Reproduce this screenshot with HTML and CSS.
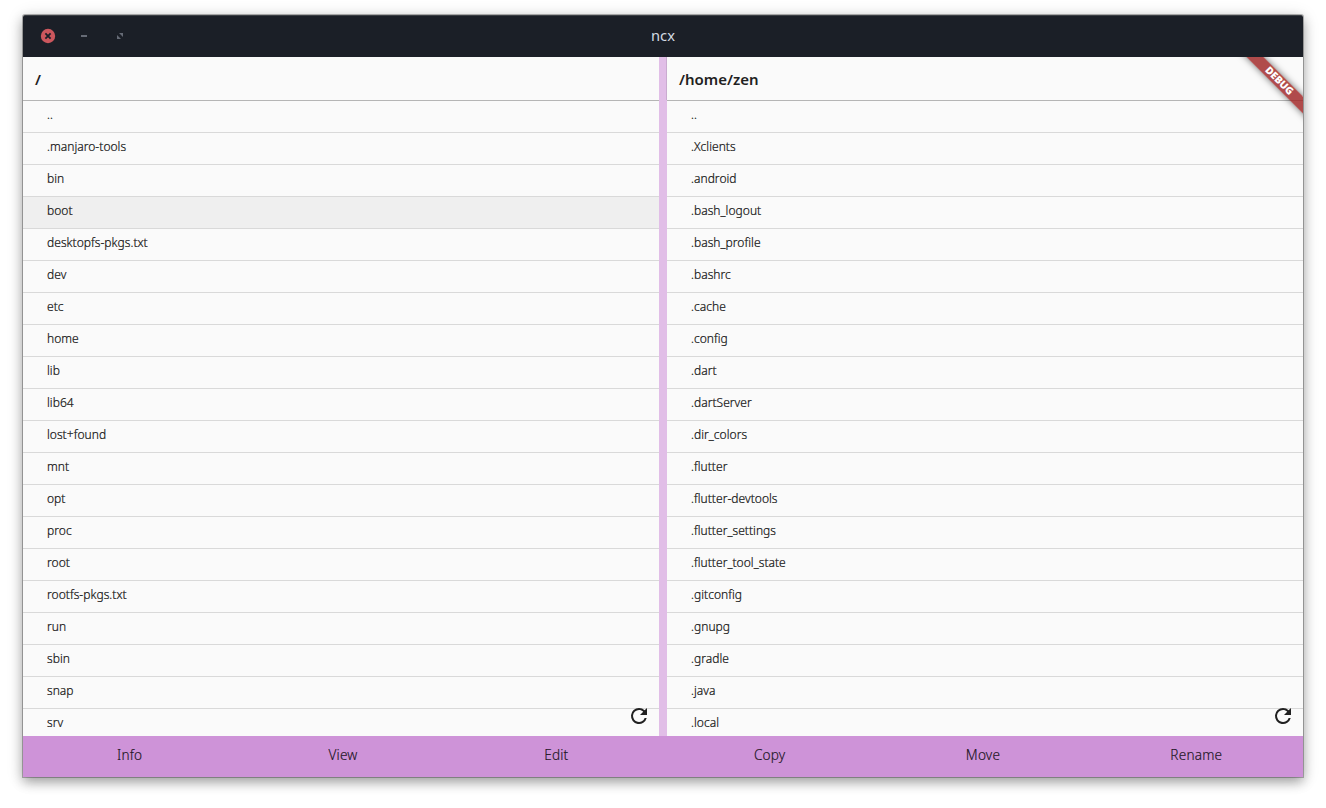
FILE: index.html
```html
<!DOCTYPE html>
<html lang="en">
<head>
<meta charset="utf-8">
<title>ncx</title>
<link rel="stylesheet" href="styles.css">
</head>
<body>
<div class="window">
  <header class="titlebar">
    <svg class="controls" width="110" height="42" viewBox="0 0 110 42">
      <circle cx="25" cy="21" r="7.2" fill="#cc575d"/>
      <path d="M22.4 18.4l5.2 5.2M27.6 18.4l-5.2 5.2" stroke="#1b1f27" stroke-width="1.8"/>
      <path d="M58 21h6" stroke="#666b76" stroke-width="2"/>
      <path d="M96 18h4v4zM94 20v4h4z" fill="#666b76"/>
    </svg>
    <span class="title">ncx</span>
  </header>
  <main class="panes">
    <section class="pane">
      <h1 class="path">/</h1>
      <ul class="files">
        <li>..</li><li>.manjaro-tools</li><li>bin</li><li class="selected">boot</li><li>desktopfs-pkgs.txt</li><li>dev</li><li>etc</li><li>home</li><li>lib</li><li>lib64</li><li>lost+found</li><li>mnt</li><li>opt</li><li>proc</li><li>root</li><li>rootfs-pkgs.txt</li><li>run</li><li>sbin</li><li>snap</li><li>srv</li>
      </ul>
      <svg class="refresh" viewBox="0 0 24 24"><path d="M17.65 6.35A7.96 7.96 0 0 0 12 4a8 8 0 1 0 7.73 10h-2.08A6 6 0 1 1 12 6c1.66 0 3.14.69 4.22 1.78L13 11h7V4z"/></svg>
    </section>
    <div class="divider"></div>
    <section class="pane">
      <h1 class="path">/home/zen</h1>
      <ul class="files">
        <li>..</li><li>.Xclients</li><li>.android</li><li>.bash_logout</li><li>.bash_profile</li><li>.bashrc</li><li>.cache</li><li>.config</li><li>.dart</li><li>.dartServer</li><li>.dir_colors</li><li>.flutter</li><li>.flutter-devtools</li><li>.flutter_settings</li><li>.flutter_tool_state</li><li>.gitconfig</li><li>.gnupg</li><li>.gradle</li><li>.java</li><li>.local</li>
      </ul>
      <svg class="refresh" viewBox="0 0 24 24"><path d="M17.65 6.35A7.96 7.96 0 0 0 12 4a8 8 0 1 0 7.73 10h-2.08A6 6 0 1 1 12 6c1.66 0 3.14.69 4.22 1.78L13 11h7V4z"/></svg>
    </section>
    <div class="debug"><span>DEBUG</span></div>
  </main>
  <footer class="actions">
    <span>Info</span><span>View</span><span>Edit</span><span>Copy</span><span>Move</span><span>Rename</span>
  </footer>
</div>
</body>
</html>
```
FILE: styles.css
```css
* { box-sizing: border-box; }
body {
  margin: 0;
  padding: 15px 23px 31px;
  height: 808px;
  overflow: hidden;
  background: #fff;
  font-family: "Noto Sans", sans-serif;
  color: #212121;
}
.window {
  display: flex;
  flex-direction: column;
  width: 1280px;
  height: 762px;
  border-radius: 2px 2px 0 0;
  box-shadow: 0 0 0 1px rgba(0, 0, 0, .27), 0 5px 12px rgba(0, 0, 0, .32), 0 2px 18px rgba(0, 0, 0, .14);
}
.titlebar {
  position: relative;
  flex: 0 0 42px;
  display: flex;
  align-items: center;
  justify-content: center;
  padding-bottom: 4px;
  border-top: 1px solid #3b3f44;
  border-radius: 2px 2px 0 0;
  background: #1b1f27;
  color: #d3dae3;
}
.controls { position: absolute; left: 0; top: -1px; }
.title { font-size: 14.7px; line-height: 20px; }
.panes {
  position: relative;
  flex: 1;
  min-height: 0;
  display: flex;
  overflow: hidden;
  background: #fafafa;
}
.pane {
  position: relative;
  flex: 1;
  min-width: 0;
  overflow: hidden;
}
.path {
  margin: 0;
  height: 44px;
  padding: 0 12px;
  border-bottom: 1px solid #b5b5b5;
  font-size: 15px;
  font-weight: 600;
  line-height: 45px;
}
.files { margin: 0; padding: 0; list-style: none; }
.files li {
  height: 32px;
  padding-left: 24px;
  border-bottom: 1px solid #d9d9d9;
  color: #111;
  -webkit-text-stroke: .2px #111;
  font-size: 12px;
  font-weight: 300;
  letter-spacing: .04px;
  line-height: 28px;
  white-space: nowrap;
}
.files .selected { background: #efefef; }
.divider { width: 8px; background: #e1bee7; }
.divider::before {
  content: "";
  display: block;
  height: 43px;
  border-right: 1px solid #caabd0;
}
.refresh {
  position: absolute;
  right: 8px;
  bottom: 8px;
  width: 24px;
  height: 24px;
  fill: #212121;
}
.debug {
  position: absolute;
  top: 0;
  right: 0;
  width: 80px;
  height: 80px;
  overflow: hidden;
}
.debug span {
  position: absolute;
  left: 4px;
  top: 18px;
  width: 104px;
  height: 12px;
  background: rgba(160, 36, 36, .82);
  box-shadow: 0 0 7px rgba(0, 0, 0, .55);
  color: #fff;
  font-size: 10.2px;
  font-weight: 900;
  line-height: 11px;
  text-align: center;
  transform: rotate(45deg);
}
.actions {
  flex: 0 0 41px;
  display: grid;
  grid-template-columns: repeat(6, 1fr);
  background: #ce93d8;
  font-size: 13.6px;
  font-weight: 300;
  letter-spacing: .2px;
  line-height: 38px;
  text-align: center;
  color: #1c131e;
  -webkit-text-stroke: .15px #1c131e;
}
```
